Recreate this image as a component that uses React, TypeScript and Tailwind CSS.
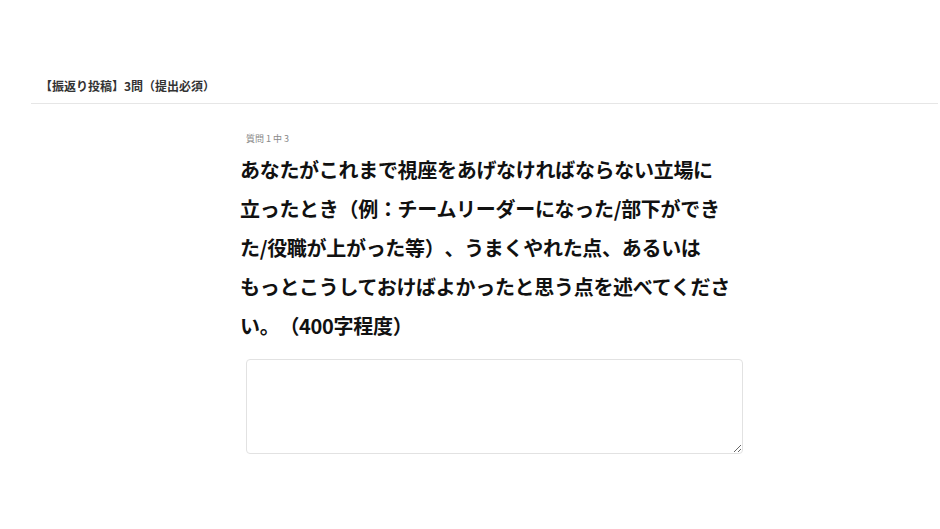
import React from "react";

export default function App() {
  const lines = [
    "あなたがこれまで視座をあげなければならない立場に",
    "立ったとき（例：チームリーダーになった/部下ができ",
    "た/役職が上がった等）、うまくやれた点、あるいは",
    "もっとこうしておけばよかったと思う点を述べてくださ",
    "い。（400字程度）",
  ];
  return (
    <div
      className="w-[940px] h-[529px] bg-white overflow-hidden [text-spacing-trim:space-all]"
      style={{ fontFamily: '"Noto Sans CJK JP", "Noto Sans", sans-serif' }}
    >
      <div className="ml-[31px] mr-[2px] pt-[76px] border-b border-[#e6e6e6]">
        <div className="pl-[9px] pb-[7px] text-[12px] leading-[20px] font-bold text-[#333]">
          【振返り投稿】3問（提出必須）
        </div>
      </div>
      <div className="ml-[240px] w-[520px] pt-[28px]">
        <div className="pl-[6px] text-[9px] leading-[14px] text-[#888]">質問 1 中 3</div>
        <div className="mt-[4px] text-[20px] leading-[39px] font-bold text-[#111] tracking-[-0.3px]">
          {lines.map((l, i) => (
            <div key={i} className="whitespace-nowrap">
              {l}
            </div>
          ))}
        </div>
        <div className="pl-[6px] mt-[14px]">
          <textarea className="block w-[497px] h-[95px] border border-[#e2e2e2] rounded-[4px] outline-none resize-y" />
        </div>
      </div>
    </div>
  );
}
